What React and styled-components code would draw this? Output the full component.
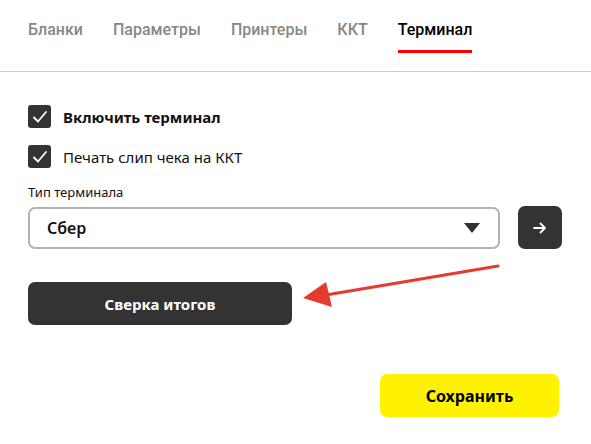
import React from "react";
import styled, { createGlobalStyle } from "styled-components";

const Global = createGlobalStyle`
  html, body {
    margin: 0;
    padding: 0;
    background: #fff;
    font-family: "Noto Sans", "Open Sans", Arial, sans-serif;
    color: #111;
  }
`;

const Page = styled.div`
  position: relative;
  width: 591px;
  height: 444px;
  overflow: hidden;
`;

const Tabs = styled.nav`
  display: flex;
  gap: 30px;
  padding: 19px 0 0 28px;
  height: 72px;
  box-sizing: border-box;
  border-bottom: 1px solid #cccccc;
`;

const Tab = styled.div`
  display: flex;
  flex-direction: column;
  align-items: stretch;
  font-family: Roboto, "Noto Sans", sans-serif;
  font-size: 16px;
  line-height: 22px;
  font-weight: 500;
  color: ${(p) => (p.$active ? "#000" : "#878787")};
  cursor: pointer;
  &::after {
    content: "";
    height: 3px;
    margin-top: 9px;
    background: ${(p) => (p.$active ? "#ff0000" : "transparent")};
  }
`;

const Content = styled.div`
  padding: 33px 28px 0 28px;
  display: flex;
  flex-direction: column;
`;

const CheckRow = styled.label`
  display: flex;
  align-items: center;
  gap: 12px;
  height: 23px;
  margin-bottom: ${(p) => p.$mb || 0}px;
  font-size: 15px;
  font-weight: ${(p) => (p.$bold ? 700 : 400)};
  color: #111;
`;

const Box = styled.span`
  width: 23px;
  height: 23px;
  border-radius: 3px;
  background: #333333;
  display: flex;
  align-items: center;
  justify-content: center;
`;

const FieldLabel = styled.div`
  margin-top: 16px;
  font-size: 13px;
  line-height: 16px;
  color: #111;
`;

const SelectRow = styled.div`
  display: flex;
  gap: 18px;
  margin-top: 6px;
  align-items: center;
`;

const Select = styled.div`
  flex: 0 0 472px;
  height: 42px;
  box-sizing: border-box;
  border: 2px solid #b3b3b3;
  border-radius: 7px;
  display: flex;
  align-items: center;
  justify-content: space-between;
  padding: 0 18px 0 17px;
  font-size: 16px;
  font-weight: 600;
`;

const Caret = styled.span`
  width: 0;
  height: 0;
  border-left: 8px solid transparent;
  border-right: 8px solid transparent;
  border-top: 10px solid #333;
`;

const IconButton = styled.button`
  width: 44px;
  height: 43px;
  border: none;
  border-radius: 7px;
  background: #333333;
  display: flex;
  align-items: center;
  justify-content: center;
  padding: 0;
`;

const DarkButton = styled.button`
  margin-top: 33px;
  width: 264px;
  height: 43px;
  border: none;
  border-radius: 7px;
  background: #333333;
  color: #fff;
  font-family: inherit;
  font-size: 15px;
  font-weight: 700;
`;

const Footer = styled.div`
  display: flex;
  justify-content: flex-end;
  padding-right: 32px;
  margin-top: 49px;
`;

const SaveButton = styled.button`
  width: 179px;
  height: 43px;
  border: none;
  border-radius: 7px;
  background: #fff200;
  color: #000;
  font-family: inherit;
  font-size: 16px;
  font-weight: 700;
`;

const Pointer = styled.svg`
  position: absolute;
  left: 0;
  top: 0;
  pointer-events: none;
`;

const Check = () => (
  <svg width="16" height="14" viewBox="0 0 16 14">
    <path d="M2 7.5 L6 11.5 L14 2" fill="none" stroke="#fff" strokeWidth="1.8" strokeLinecap="round" strokeLinejoin="round" />
  </svg>
);

export default function App() {
  const tabs = ["Бланки", "Параметры", "Принтеры", "ККТ", "Терминал"];
  return (
    <Page>
      <Global />
      <Tabs>
        {tabs.map((t) => (
          <Tab key={t} $active={t === "Терминал"}>{t}</Tab>
        ))}
      </Tabs>
      <Content>
        <CheckRow $bold $mb={17}>
          <Box><Check /></Box>
          Включить терминал
        </CheckRow>
        <CheckRow>
          <Box><Check /></Box>
          Печать слип чека на ККТ
        </CheckRow>
        <FieldLabel>Тип терминала</FieldLabel>
        <SelectRow>
          <Select>
            Сбер
            <Caret />
          </Select>
          <IconButton>
            <svg width="14" height="12" viewBox="0 0 14 12">
              <path d="M1 6 H12 M7.5 1.5 L12 6 L7.5 10.5" fill="none" stroke="#fff" strokeWidth="1.8" strokeLinecap="round" strokeLinejoin="round" />
            </svg>
          </IconButton>
        </SelectRow>
        <DarkButton>Сверка итогов</DarkButton>
      </Content>
      <Footer>
        <SaveButton>Сохранить</SaveButton>
      </Footer>
      <Pointer width="591" height="444" viewBox="0 0 591 444">
        <line x1="498" y1="266" x2="320" y2="296" stroke="#e53b2f" strokeWidth="3.2" strokeLinecap="round" />
        <polygon points="303,298 326,282 332,307" fill="#e53b2f" />
      </Pointer>
    </Page>
  );
}
